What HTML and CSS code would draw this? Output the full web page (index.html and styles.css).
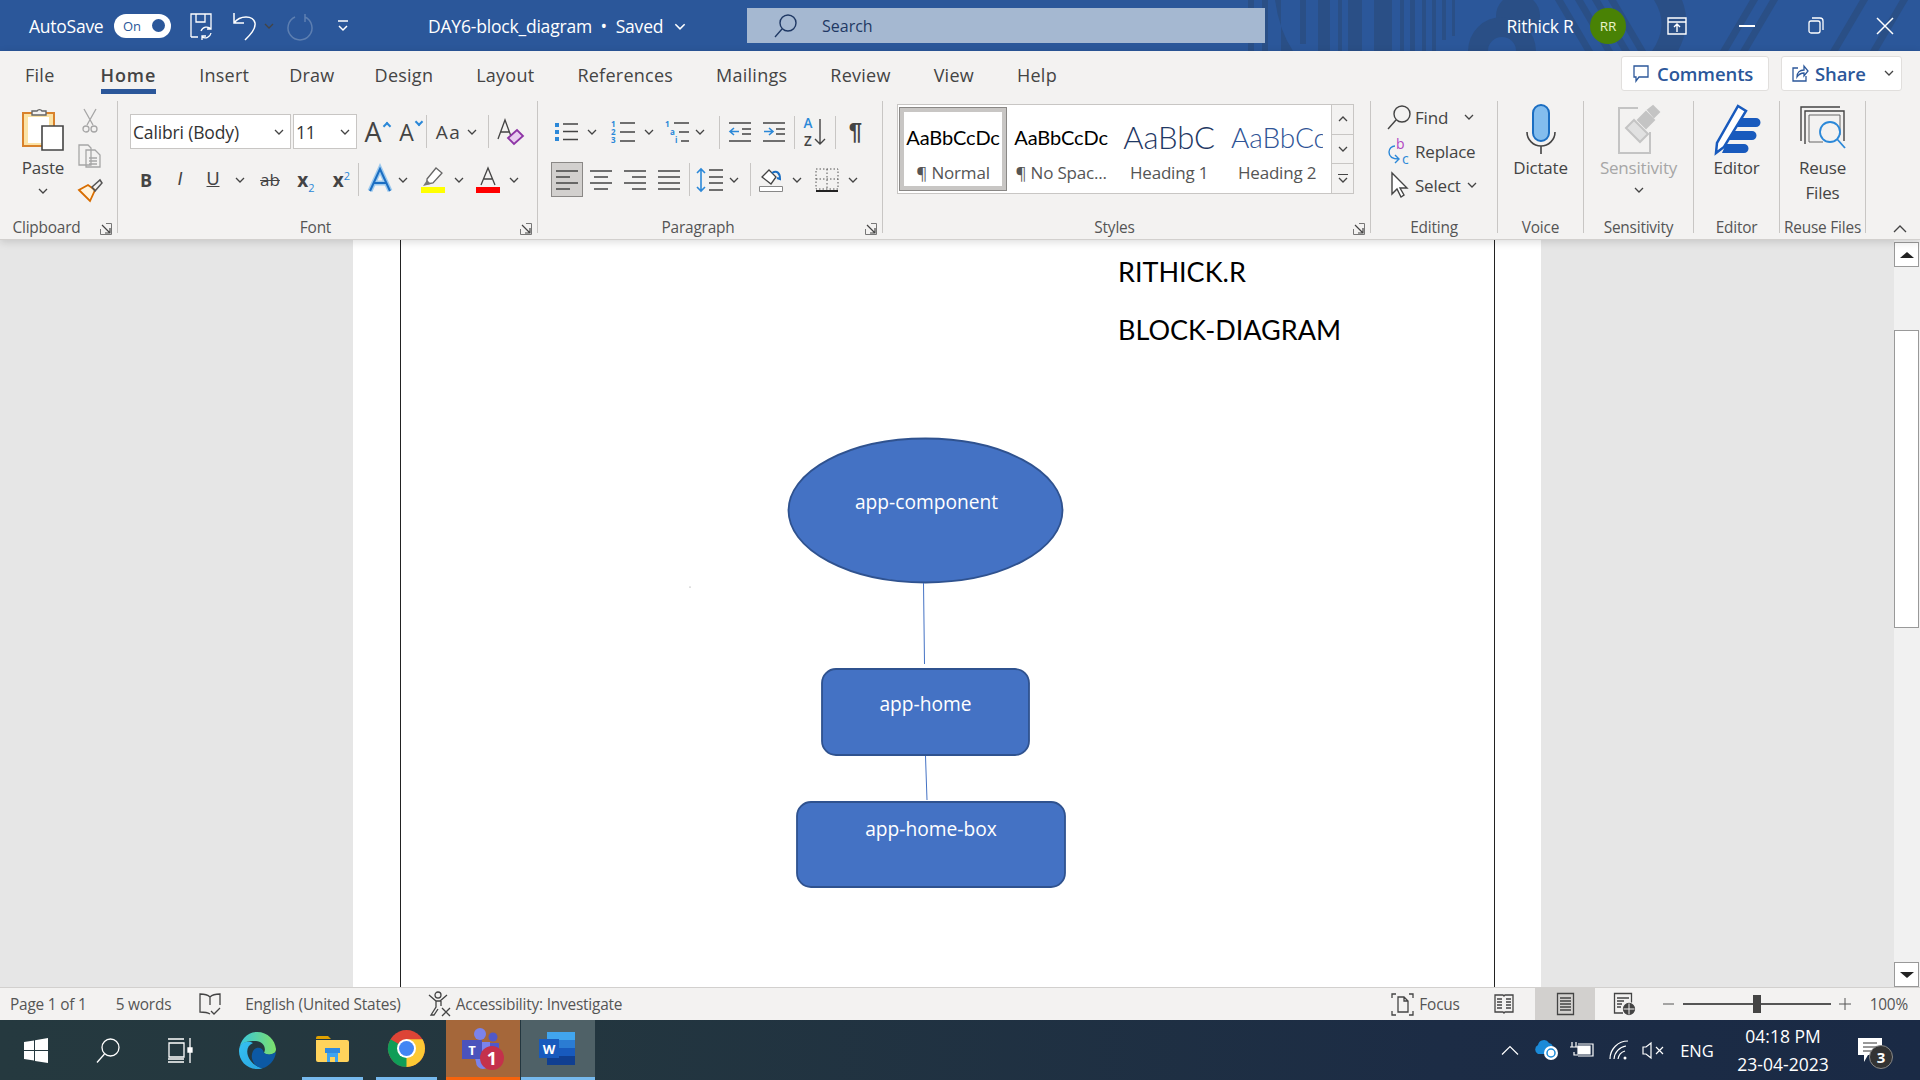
FILE: index.html
```html
<!DOCTYPE html>
<html lang="en">
  <head>
    <meta charset="UTF-8" />
    <title>DAY6-block_diagram - Word</title>
    <link rel="stylesheet" href="styles.css">
  </head>
  <body>
    <svg class="defs" width="0" height="0">
      <symbol id="chev" viewBox="0 0 10 6"><path d="M1 1l4 4 4-4" fill="none" stroke="currentColor" stroke-width="1.3"/></symbol>
      <symbol id="launch" viewBox="0 0 12 12"><path d="M.5.5h11v11H.5z" fill="none" stroke="#777"/><path d="M0 0h6v3H3v3H0z" fill="#f3f2f1"/><path d="M2 2l8 8M5 10h5V5" fill="none" stroke="#444" stroke-width="1.2"/></symbol>
    </svg>

    <div class="app">
      <!-- title bar -->
      <header class="titlebar">
        <svg class="title-pattern" width="690" height="51" viewBox="0 0 690 51">
          <g fill="#2a4f86">
            <path d="M18 0h6v51h-6zM32 0h6v51h-6zM45 0q4 30 18 51h-12V0zM70 0h6v44h-6zM88 0h12v51H88zM108 0h4v51h-4zM118 0h14v51h-14zM144 0h18v51h-18zM170 0h4v51h-4zM180 0h5v51h-5zM192 0h4v51h-4zM202 0h4v51h-4zM212 0h4v40h-4zM222 0h3v36h-3z"/>
            <circle cx="288" cy="16" r="22"/>
            <path d="M238 51a34 34 0 0 1 68 0h-20a14 14 0 0 0-28 0z"/>
            <path d="M325 0h8l30 51h-8zM345 0h8l30 51h-8zM362 0h8l30 51h-8zM378 0h8l30 51h-8z"/>
            <path d="M424 0h28q10 25-4 51h-26q18-26 2-51z"/>
            <path d="M490 51l30-51h8l-30 51zM510 51l30-51h8l-30 51zM640 51l30-51h8l-30 51zM600 51l30-51h8l-30 51z"/>
          </g>
        </svg>
        <div class="qat">
          <span class="autosave">AutoSave</span>
          <span class="toggle"><span>On</span><i></i></span>
          <svg class="ti" width="26" height="27" viewBox="0 0 26 27" fill="none" stroke="#fff" stroke-width="1.3"><path d="M3 25V2h20v14M8 2v8h9V2M3 25h7M14 25a6 6 0 0 0 9-4M13 19a6 6 0 0 1 10-2M23 13v4h-4M14 28v-4h4"/></svg>
          <span class="tool-gap"><svg width="26" height="31" viewBox="0 0 26 31" fill="none" stroke="#fff" stroke-width="1.5"><path d="M2 3v10h10M2 13C8 5 21 5 23 13c1 6-5 12-10 17"/></svg><svg class="ch10" color="#fff"><use href="#chev"/></svg></span>
          <svg width="26" height="28" viewBox="0 0 26 28" fill="none" stroke="#5d7fb1" stroke-width="1.5"><path d="M8 5A12 12 0 1 0 18 5M18 2v8"/></svg>
          <svg width="12" height="14" viewBox="0 0 12 14" fill="none" stroke="#fff" stroke-width="1.5"><path d="M1 2h10M2 7l4 4 4-4"/></svg>
          <span class="doc-title">DAY6-block_diagram &nbsp;•&nbsp; Saved <svg class="ch11" color="#fff"><use href="#chev"/></svg></span>
        </div>
        <div class="search">
          <svg width="24" height="26" viewBox="0 0 24 26" fill="none" stroke="#1f3864" stroke-width="1.4"><circle cx="14" cy="10" r="8"/><path d="M8 16L1 24"/></svg>
          <span>Search</span>
        </div>
        <div class="title-right">
          <span class="user">Rithick R</span>
          <span class="avatar">RR</span>
          <svg width="20" height="18" viewBox="0 0 20 18" fill="none" stroke="#fff" stroke-width="1.4"><path d="M1 1h18v16H1zM1 5h18M10 15V8M7 10l3-3 3 3"/></svg>
          <svg width="16" height="2"><path d="M0 1h16" stroke="#fff" stroke-width="2"/></svg>
          <svg width="16" height="17" viewBox="0 0 16 17" fill="none" stroke="#fff" stroke-width="1.3"><rect x="1" y="4" width="11" height="12" rx="2"/><path d="M4 1h8a3 3 0 0 1 3 3v9"/></svg>
          <svg width="16" height="16" viewBox="0 0 16 16" stroke="#fff" stroke-width="1.5"><path d="M0 0l16 16M16 0L0 16"/></svg>
        </div>
      </header>

      <!-- ribbon -->
      <section class="ribbon">
        <div class="tabs">
          <nav class="tab-list">
            <span>File</span>
            <span class="active">Home</span>
            <span class="tab-tight">Insert</span>
            <span class="tab-tight">Draw</span>
            <span>Design</span>
            <span>Layout</span>
            <span>References</span>
            <span>Mailings</span>
            <span>Review</span>
            <span>View</span>
            <span>Help</span>
          </nav>
          <button class="action comments">
            <svg width="16" height="17" viewBox="0 0 16 17" fill="none" stroke="#2b579a" stroke-width="1.3"><path d="M1 1h14v11H6l-3 4v-4H1z"/></svg>
            Comments
          </button>
          <button class="action share">
            <svg width="17" height="17" viewBox="0 0 17 17" fill="none" stroke="#2b579a" stroke-width="1.3"><path d="M6 3H1v13h13v-5M5 12c0-5 3-7 7-7V1l4 5-4 5V8c-3 0-5 1-7 4z"/></svg>
            Share
            <svg class="ch10 share-chev" color="#2b579a"><use href="#chev"/></svg>
          </button>
        </div>

        <div class="groups">
          <div class="group clipboard">
            <div class="group-body clip-body">
              <div class="paste">
                <svg width="42" height="44" viewBox="0 0 42 44">
                  <path d="M1 6h31v33H1z" fill="#fbe3a6" stroke="#d9822b" stroke-width="2"/>
                  <path d="M6 10h21v26H6z" fill="#fff"/>
                  <path d="M10 8V4h5a3 3 0 0 1 5 0h4v4z" fill="#f3f2f1" stroke="#666" stroke-width="1.4"/>
                  <path d="M20 19h21v24H20z" fill="#fff" stroke="#444" stroke-width="1.6"/>
                </svg>
                <span class="tool-text">Paste</span>
                <svg class="ch10" color="#444"><use href="#chev"/></svg>
              </div>
              <div class="clip-tools">
                <svg width="16" height="24" viewBox="0 0 16 24" fill="none" stroke="#a6a6a6" stroke-width="1.3"><path d="M2 0l9 16M14 0L5 16"/><circle cx="4" cy="20" r="3"/><circle cx="12" cy="20" r="3"/></svg>
                <svg width="24" height="24" viewBox="0 0 24 24" fill="none" stroke="#a6a6a6" stroke-width="1.3"><path d="M1 1h9l3 3v17H1zM8 6h9l5 5v12H8zM11 14h8M11 17h8M11 20h8"/></svg>
                <svg width="24" height="23" viewBox="0 0 24 23"><path d="M1 11l11 11 5-11-7-5z" fill="#fff3dc" stroke="#d86d00" stroke-width="1.8"/><path d="M14 8l8-7 2 3-7 8z" fill="none" stroke="#555" stroke-width="1.5"/></svg>
              </div>
            </div>
            <div class="group-label has-launcher">Clipboard</div>
            <svg class="launcher"><use href="#launch"/></svg>
          </div>

          <div class="group font">
            <div class="group-body">
              <div class="row font-r1">
                <span class="combo font-name">Calibri (Body)<svg class="ch10"><use href="#chev"/></svg></span>
                <span class="combo font-size">11<svg class="ch10"><use href="#chev"/></svg></span>
                <span class="glyph-a big">A<sup class="mini-up"></sup></span>
                <span class="glyph-a">A<sup class="mini-down"></sup></span>
                <i class="vsep"></i>
                <span class="tool-gap aa"><span class="glyph-aa">Aa</span><svg class="ch10"><use href="#chev"/></svg></span>
                <i class="vsep"></i>
                <svg width="26" height="26" viewBox="0 0 26 26"><path d="M1 20L8 1l7 19M4 13h8" fill="none" stroke="#444" stroke-width="1.3"/><path d="M11 19l9-8 6 6-9 8z" fill="#e8cdf0" stroke="#8e35a6" stroke-width="1.8"/></svg>
              </div>
              <div class="row font-r2">
                <b class="glyph-b">B</b>
                <i class="glyph-i">I</i>
                <u class="glyph-u">U</u>
                <svg class="ch10"><use href="#chev"/></svg>
                <s class="glyph-s">ab</s>
                <span class="glyph-x">x<sub>2</sub></span>
                <span class="glyph-x sup-x">x<sup>2</sup></span>
                <i class="vsep"></i>
                <span class="tool-gap"><svg width="24" height="26" viewBox="0 0 24 26"><path d="M2 24L12 2l10 22M6 16h12" fill="none" stroke="#9cc9ee" stroke-width="5"/><path d="M2 24L12 2l10 22M6 16h12" fill="none" stroke="#1b6ec2" stroke-width="2"/></svg><svg class="ch10"><use href="#chev"/></svg></span>
                <span class="tool-gap wide"><svg width="24" height="26" viewBox="0 0 24 26"><path d="M6 12l9-11 6 5-9 10-6 1z" fill="#fff" stroke="#666" stroke-width="1.3"/><path d="M2 19l4-6 4 4z" fill="#777"/><path d="M0 20h24v6H0z" fill="#ff0"/></svg><svg class="ch10"><use href="#chev"/></svg></span>
                <span class="tool-gap wide"><svg width="24" height="26" viewBox="0 0 24 26"><path d="M5 18L12 1l7 17M8 12h8" fill="none" stroke="#444" stroke-width="1.3"/><path d="M0 20h24v6H0z" fill="#f00"/></svg><svg class="ch10"><use href="#chev"/></svg></span>
              </div>
            </div>
            <div class="group-label has-launcher">Font</div>
            <svg class="launcher"><use href="#launch"/></svg>
          </div>

          <div class="group paragraph">
            <div class="group-body">
              <div class="row para-r1">
                <span class="tool-gap wide"><svg width="24" height="22" viewBox="0 0 24 22"><path d="M1 2h4v4H1zM1 9h4v4H1zM1 16h4v4H1z" fill="#2b88d8"/><path d="M9 3h15M9 10.500h15M9 18.500h15" stroke="#444" stroke-width="1.6"/></svg><svg class="ch10"><use href="#chev"/></svg></span>
                <span class="tool-gap wide"><svg width="24" height="24" viewBox="0 0 24 24"><path d="M9 3h15M9 12h15M9 21h15" stroke="#444" stroke-width="1.6"/><text x="0" y="7" class="num">1</text><text x="0" y="15" class="num">2</text><text x="0" y="23" class="num">3</text></svg><svg class="ch10"><use href="#chev"/></svg></span>
                <span class="tool-gap"><svg width="24" height="24" viewBox="0 0 24 24"><path d="M9 3h15M14 12h10M16 21h8" stroke="#444" stroke-width="1.6"/><text x="0" y="7" class="num">1</text><text x="5" y="15" class="num">a</text><text x="10" y="23" class="num">i</text></svg><svg class="ch10"><use href="#chev"/></svg></span>
                <i class="vsep"></i>
                <svg width="22" height="22" viewBox="0 0 22 22" fill="none"><path d="M0 2h22M13 8h9M13 13h9M0 20h22" stroke="#444" stroke-width="1.6"/><path d="M10 10.500H1M5 7l-4 3.500 4 3.500" stroke="#2b88d8" stroke-width="1.6"/></svg>
                <svg width="22" height="22" viewBox="0 0 22 22" fill="none"><path d="M0 2h22M13 8h9M13 13h9M0 20h22" stroke="#444" stroke-width="1.6"/><path d="M1 10.500h9M6 7l4 3.500-4 3.500" stroke="#2b88d8" stroke-width="1.6"/></svg>
                <i class="vsep"></i>
                <span class="sort"><span class="sort-az"><span class="sort-a">A</span><span>Z</span></span><svg width="12" height="26" viewBox="0 0 12 26" fill="none" stroke="#444" stroke-width="1.4"><path d="M6 0v25M1 20l5 5 5-5"/></svg></span>
                <i class="vsep"></i>
                <span class="pilcrow">¶</span>
              </div>
              <div class="row para-r2">
                <span class="pressed"><svg width="22" height="20" viewBox="0 0 22 20"><path d="M0 1h22M0 7h14M0 13h22M0 19h14" stroke="#444" stroke-width="1.6"/></svg></span>
                <svg width="22" height="20" viewBox="0 0 22 20"><path d="M0 1h22M4 7h14M0 13h22M4 19h14" stroke="#444" stroke-width="1.6"/></svg>
                <svg width="22" height="20" viewBox="0 0 22 20"><path d="M0 1h22M8 7h14M0 13h22M8 19h14" stroke="#444" stroke-width="1.6"/></svg>
                <svg width="22" height="20" viewBox="0 0 22 20"><path d="M0 1h22M0 7h22M0 13h22M0 19h22" stroke="#444" stroke-width="1.6"/></svg>
                <i class="vsep"></i>
                <span class="tool-gap"><svg width="26" height="24" viewBox="0 0 26 24" fill="none"><path d="M12 2h14M12 9h14M12 15h14M12 22h14" stroke="#444" stroke-width="1.6"/><path d="M4 1v22M0 5l4-4 4 4M0 19l4 4 4-4" stroke="#2b88d8" stroke-width="1.6"/></svg><svg class="ch10"><use href="#chev"/></svg></span>
                <i class="vsep"></i>
                <span class="tool-gap wide"><svg width="24" height="25" viewBox="0 0 24 25"><path d="M3 10L10 3l7 7-5 7z" fill="#fff" stroke="#444" stroke-width="1.3"/><path d="M13 6c5-3 8 0 8 6l-3-1" fill="none" stroke="#1b6ec2" stroke-width="2"/><path d="M.5 19.500h23v5H.5z" fill="#fff" stroke="#888"/></svg><svg class="ch10"><use href="#chev"/></svg></span>
                <span class="tool-gap wide"><svg width="24" height="24" viewBox="0 0 24 24" fill="none"><path d="M1 1h22v20H1zM12 1v20M1 11h22" stroke="#555" stroke-dasharray="1.500 2"/><path d="M1 23h22" stroke="#222" stroke-width="2"/></svg><svg class="ch10"><use href="#chev"/></svg></span>
              </div>
            </div>
            <div class="group-label has-launcher">Paragraph</div>
            <svg class="launcher"><use href="#launch"/></svg>
          </div>

          <div class="group styles">
            <div class="group-body">
              <div class="gallery">
                <div class="style-cell selected"><span class="preview">AaBbCcDc</span><span class="style-name">¶ Normal</span></div>
                <div class="style-cell"><span class="preview">AaBbCcDc</span><span class="style-name">¶ No Spac...</span></div>
                <div class="style-cell"><span class="preview h1">AaBbC</span><span class="style-name">Heading 1</span></div>
                <div class="style-cell"><span class="preview h2">AaBbCc</span><span class="style-name">Heading 2</span></div>
                <div class="gallery-scroll">
                  <span class="muted"><svg class="ch10 flip" color="#a6a6a6"><use href="#chev"/></svg></span>
                  <span><svg class="ch10"><use href="#chev"/></svg></span>
                  <span class="more"><i></i><svg class="ch10"><use href="#chev"/></svg></span>
                </div>
              </div>
            </div>
            <div class="group-label has-launcher">Styles</div>
            <svg class="launcher"><use href="#launch"/></svg>
          </div>

          <div class="group editing">
            <div class="group-body edit-list">
              <div class="edit-row">
                <svg width="24" height="25" viewBox="0 0 24 25" fill="none" stroke="#444" stroke-width="1.4"><circle cx="15" cy="9" r="8"/><path d="M9 15l-8 9"/></svg>
                <span>Find</span>
                <svg class="ch10 find-chev"><use href="#chev"/></svg>
              </div>
              <div class="edit-row">
                <svg width="24" height="27" viewBox="0 0 24 27" fill="none"><text x="9" y="11" class="rep-b">b</text><text x="15" y="26" class="rep-c">c</text><path d="M8 8a6 6 0 0 0-6 6c0 5 4 7 10 7M8 17l4 4-4 4" stroke="#2b88d8" stroke-width="1.4"/></svg>
                <span>Replace</span>
              </div>
              <div class="edit-row">
                <svg width="24" height="26" viewBox="0 0 24 26" fill="#fff" stroke="#444" stroke-width="1.4"><path d="M5 1v21l5-5 4 8 3-2-4-7h7z"/></svg>
                <span>Select</span>
                <svg class="ch10"><use href="#chev"/></svg>
              </div>
            </div>
            <div class="group-label">Editing</div>
          </div>

          <div class="group voice big-group">
            <div class="group-body big-tool">
              <svg width="30" height="50" viewBox="0 0 30 50" fill="none"><rect x="7" y="1" width="16" height="36" rx="8" fill="#83bdee" stroke="#1b6ec2" stroke-width="2"/><path d="M1 28a14 14 0 0 0 28 0M15 42v8" stroke="#444" stroke-width="1.6"/></svg>
              <span class="tool-text">Dictate</span>
            </div>
            <div class="group-label">Voice</div>
          </div>

          <div class="group sensitivity big-group">
            <div class="group-body big-tool dim">
              <svg width="42" height="50" viewBox="0 0 42 50" fill="none" stroke="#c4c4c4" stroke-width="2"><path d="M20 4H1v45h31V28"/><path d="M8 24l8-8 14 14-8 8z" fill="#e1e1e1"/><path d="M20 16l8-8 8 8-8 8z" fill="#c4c4c4"/><path d="M30 6l5-4 6 6-5 5z" fill="#c4c4c4"/></svg>
              <span class="tool-text">Sensitivity</span>
              <svg class="ch10" color="#b3b3b3"><use href="#chev"/></svg>
            </div>
            <div class="group-label">Sensitivity</div>
          </div>

          <div class="group editor big-group">
            <div class="group-body big-tool">
              <svg width="46" height="50" viewBox="0 0 46 50"><path d="M24 14h18a4 4 0 0 1 0 9H20zM18 27h20a4 4 0 0 1 0 9H14zM12 40h18a4 4 0 0 1 0 9H8z" fill="#185abd"/><path d="M24 2l8 5L10 43l-8 6 1-10z" fill="#fff" stroke="#185abd" stroke-width="2.5"/></svg>
              <span class="tool-text">Editor</span>
            </div>
            <div class="group-label">Editor</div>
          </div>

          <div class="group reuse big-group">
            <div class="group-body big-tool">
              <svg width="46" height="46" viewBox="0 0 46 46" fill="none"><path d="M1 35V1h39" stroke="#444" stroke-width="1.400"/><path d="M5 38V5h39v30" stroke="#444" stroke-width="1.400"/><path d="M9 36V9h31v20M9 36h14" stroke="#666"/><circle cx="30" cy="26" r="10" fill="#f3f2f1" stroke="#2b88d8" stroke-width="1.800"/><path d="M37 33l8 9" stroke="#2b88d8" stroke-width="1.800"/></svg>
              <span class="tool-text two-line">Reuse<br>Files</span>
            </div>
            <div class="group-label">Reuse Files</div>
          </div>

          <svg class="collapse" width="14" height="9" viewBox="0 0 14 9" fill="none" stroke="#444" stroke-width="1.300"><path d="M1 8l6-6 6 6"/></svg>
        </div>
      </section>

      <!-- document -->
      <main class="workspace">
        <div class="canvas">
          <div class="page">
            <div class="page-inner">
              <p class="doc-line first">RITHICK.R</p>
              <p class="doc-line">BLOCK-DIAGRAM</p>
              <svg class="diagram" width="700" height="500" viewBox="401 420 700 500">
                <ellipse cx="925.500" cy="510.500" rx="137" ry="72" class="shape"/>
                <path d="M923.500 583l1 81M925.500 756l1.500 44" class="link"/>
                <rect x="822" y="669" width="207" height="86" rx="14" class="shape"/>
                <rect x="797" y="802" width="268" height="85" rx="14" class="shape"/>
                <text x="926.500" y="509" class="shape-text">app-component</text>
                <text x="925.500" y="711" class="shape-text">app-home</text>
                <text x="931" y="836" class="shape-text">app-home-box</text>
                <circle cx="690" cy="587" r=".6" fill="#888"/>
              </svg>
            </div>
          </div>
        </div>
        <aside class="scrollbar">
          <span class="scroll-btn"><i class="tri-up"></i></span>
          <span class="scroll-thumb"></span>
          <span class="scroll-btn"><i class="tri-down"></i></span>
        </aside>
      </main>

      <!-- status bar -->
      <footer class="statusbar">
        <div class="status-left">
          <span>Page 1 of 1</span>
          <span class="words">5 words</span>
          <svg class="book" width="24" height="24" viewBox="0 0 24 24" fill="none" stroke="#444" stroke-width="1.300"><path d="M12 5C9 2 5 2 2 2v18c3 0 7 0 10 2M12 5c3-3 6-3 10-3v11M12 5v8M13 19l3 3 6-6"/></svg>
          <span class="lang">English (United States)</span>
          <svg class="access" width="24" height="26" viewBox="0 0 24 26" fill="none" stroke="#444" stroke-width="1.300"><circle cx="10" cy="4" r="3"/><path d="M1 4l7 6h4l7-6M8 10v6l-5 8h3l4-6M13 10v5M14 17l8 8M22 17l-8 8"/></svg>
          <span class="access-text">Accessibility: Investigate</span>
        </div>
        <div class="status-right">
          <span class="focus">
            <svg width="23" height="23" viewBox="0 0 23 23" fill="none" stroke="#444" stroke-width="1.300"><path d="M1 5V1h4M18 1h4v4M1 18v4h4M22 18v4h-4M7 4h6l4 4v11H7zM13 4v4h4"/></svg>
            Focus
          </span>
          <svg class="read-view" width="20" height="20" viewBox="0 0 20 20" fill="none" stroke="#444" stroke-width="1.300"><path d="M1 1h8l1 1 1-1h8v17h-8l-1 1-1-1H1zM3 5h5M3 8h5M3 11h5M3 14h5M12 5h5M12 8h5M12 11h5M12 14h5"/></svg>
          <span class="print-view"><svg width="17" height="22" viewBox="0 0 17 22" fill="none" stroke="#444" stroke-width="1.300"><path d="M.500.500h16v21H.500zM3 5h11M3 8h11M3 11h11M3 14h11M3 17h11"/></svg></span>
          <svg width="21" height="22" viewBox="0 0 21 22" fill="none" stroke="#444" stroke-width="1.300"><path d="M9 20H.500V.500h17v9M3 5h12M3 8h7M3 11h5M3 14h4"/><circle cx="15" cy="16" r="5.500" fill="#444"/><path d="M9.500 16h11M15 10.500v11" stroke="#f3f2f1" stroke-width="1"/></svg>
          <svg width="11" height="2"><path d="M0 1h11" stroke="#555"/></svg>
          <span class="zoom-track"><i></i></span>
          <svg width="12" height="12" viewBox="0 0 12 12"><path d="M0 6h12M6 0v12" stroke="#555"/></svg>
          <span class="zoom-value">100%</span>
        </div>
      </footer>

      <!-- taskbar -->
      <footer class="taskbar">
        <div class="task-left">
          <svg width="24" height="25" viewBox="0 0 24 25" fill="#fff"><path d="M0 4l10-1.500V12H0zM11 2.300L24 0v12H11zM0 13h10v9.500L0 21zM11 13h13v12l-13-2z"/></svg>
          <svg width="24" height="25" viewBox="0 0 24 25" fill="none" stroke="#fff" stroke-width="1.300"><circle cx="14.500" cy="9.500" r="8.500"/><path d="M8.500 16L1 24.500"/></svg>
          <svg width="24" height="25" viewBox="0 0 24 25" fill="none" stroke="#fff" stroke-width="1.300"><path d="M0 1h16M0 24h16M1 5h15v14H1zM0 21h16M22 0v25"/><path d="M20 10h4v4h-4z" fill="#fff"/></svg>
          <svg width="37" height="37" viewBox="0 0 37 37">
            <defs>
              <linearGradient id="edgeA" x1="0" y1="0" x2="1" y2="1"><stop offset="0" stop-color="#35c1f1"/><stop offset="1" stop-color="#2aa4e0"/></linearGradient>
              <linearGradient id="edgeB" x1="0" y1="0" x2="1" y2="0"><stop offset="0" stop-color="#36c5e0"/><stop offset="1" stop-color="#7ee06a"/></linearGradient>
            </defs>
            <path d="M18 0c11 0 18 8 19 17 0 6-8 7-12 4 3-6-2-12-8-12C9 9 0 10 0 19 1 8 8 0 18 0z" fill="url(#edgeB)"/>
            <path d="M0 19C0 10 9 8 14 11c-5 2-7 7-5 13 2 6 8 11 15 12-2 1-4 1-6 1C8 37 0 29 0 19z" fill="url(#edgeA)"/>
            <path d="M14 19c3-5 10-4 11 2 3 2 8 2 12-1-1 9-8 15-13 16-8 0-14-9-10-17z" fill="#0c59a4"/>
          </svg>
          <span class="task-tile pinned">
            <svg width="33" height="26" viewBox="0 0 33 26"><path d="M0 2a2 2 0 0 1 2-2h10l3 3H0z" fill="#e0a100"/><path d="M0 4h31a2 2 0 0 1 2 2v18a2 2 0 0 1-2 2H2a2 2 0 0 1-2-2z" fill="#ffd35c"/><path d="M9 12h15v5H9z" fill="#2f8ae0"/><path d="M11 17h11v9h-3v-5h-5v5h-3z" fill="#3ea4f0"/></svg>
          </span>
          <span class="task-tile pinned">
            <svg width="37" height="37" viewBox="0 0 37 37"><circle cx="18.500" cy="18.500" r="18.500" fill="#dd4436"/><path d="M18.500 18.500L2.500 9.200A18.500 18.500 0 0 0 18.500 37l8-12z" fill="#109d58"/><path d="M18.500 18.500L18.500 37A18.500 18.500 0 0 0 34.500 9.300H18.500z" fill="#fcc934"/><circle cx="18.500" cy="18.500" r="9.500" fill="#fff"/><circle cx="18.500" cy="18.500" r="7.500" fill="#4285f4"/></svg>
          </span>
          <span class="task-tile teams">
            <svg width="42" height="44" viewBox="0 0 42 44"><circle cx="18" cy="7" r="6" fill="#7b83eb"/><circle cx="31" cy="10" r="4.500" fill="#5059c9"/><path d="M24 16h13v14H24z" fill="#5059c9"/><path d="M9 15h19v20a7 7 0 0 1-14 0z" fill="#7b83eb"/><path d="M0 13h20v19H0z" fill="#4b53bc"/><text x="10" y="28" class="teams-t">T</text><circle cx="30" cy="31" r="12" fill="#c4314b"/><text x="30" y="38" class="teams-n">1</text></svg>
          </span>
          <span class="task-tile word">
            <svg width="36" height="33" viewBox="0 0 36 33"><path d="M8 0h28v8H8z" fill="#41a5ee"/><path d="M8 8h28v8H8z" fill="#2b7cd3"/><path d="M8 16h28v8H8z" fill="#185abd"/><path d="M8 24h28v9H8z" fill="#103f91"/><path d="M0 7h20v19H0z" fill="#185abd"/><text x="10" y="22" class="word-w">W</text></svg>
          </span>
        </div>
        <div class="tray">
          <svg width="18" height="10" viewBox="0 0 18 10" fill="none" stroke="#fff" stroke-width="1.200"><path d="M1 9.500l8-8 8 8"/></svg>
          <svg width="25" height="22" viewBox="0 0 25 22"><path d="M4 15a5 5 0 0 1 0-9 6 6 0 0 1 11-2 5 5 0 0 1 3 8l-2 3z" fill="#1a8ad8"/><circle cx="17" cy="14" r="7" fill="#fff"/><circle cx="17" cy="14" r="4" fill="none" stroke="#1a8ad8" stroke-width="1.500"/></svg>
          <svg width="24" height="16" viewBox="0 0 24 16" fill="none" stroke="#fff" stroke-width="1.200"><path d="M0 5h8M2 0v5M6 0v5M4 10v3h4"/><path d="M8 2h15v12H8"/><path d="M8 4h12v8H8z" fill="#fff"/></svg>
          <svg width="20" height="20" viewBox="0 0 20 20" fill="none" stroke="#fff" stroke-width="1.200"><path d="M1 19A18 18 0 0 1 19 1M5 19A14 14 0 0 1 17 6M9 19a10 10 0 0 1 7-8"/><circle cx="16" cy="18" r="1.500" fill="#fff" stroke="none"/></svg>
          <svg width="22" height="17" viewBox="0 0 22 17" fill="none" stroke="#fff" stroke-width="1.200"><path d="M1 5h3l5-4v15l-5-4H1zM14 5l7 7M21 5l-7 7"/></svg>
          <span>ENG</span>
          <span class="clock"><span>04:18 PM</span><span>23-04-2023</span></span>
          <span class="notify">
            <svg width="24" height="25" viewBox="0 0 24 25"><path d="M0 0h24v17H10l-4 7v-7H0z" fill="#fff"/><path d="M5 5h14M5 9h14M5 13h8" stroke="#333"/></svg>
            <span class="notify-badge">3</span>
          </span>
        </div>
      </footer>
    </div>
  </body>
</html>
```

FILE: styles.css
```css
* {
  margin: 0;
  padding: 0;
  box-sizing: border-box;
}

html,
body {
  width: 1920px;
  height: 1080px;
  overflow: hidden;
}

body {
  font-family: "Open Sans", "Noto Sans", sans-serif;
  color: #444;
}

.defs {
  position: absolute;
}

svg {
  display: block;
  flex: none;
  overflow: visible;
}

.ch10 {
  width: 10px;
  height: 6px;
  color: #444;
}

.ch11 {
  display: inline-block;
  width: 12px;
  height: 7px;
  margin-left: 6px;
  vertical-align: 3px;
}

.flip {
  transform: scaleY(-1);
}

.app {
  display: flex;
  flex-direction: column;
  height: 1080px;
}

/* title bar */
.titlebar {
  position: relative;
  display: flex;
  flex: none;
  align-items: center;
  height: 51px;
  background-color: #2b579a;
  color: #fff;
}

.title-pattern {
  position: absolute;
  top: 0;
  right: 0;
}

.qat {
  position: relative;
  display: grid;
  grid-template-columns: 114px 57px 60px 44px 50px 36px 386px;
  align-items: center;
  justify-items: center;
  width: 747px;
}

.autosave {
  justify-self: start;
  padding-left: 29px;
  font-size: 17.5px;
  letter-spacing: -0.25px;
}

.toggle {
  display: flex;
  align-items: center;
  justify-content: space-between;
  width: 57px;
  height: 24px;
  padding: 0 6px 0 9px;
  border-radius: 12px;
  background-color: #fff;
  color: #2b579a;
  font-size: 13px;
}

.toggle i {
  width: 13px;
  height: 13px;
  border-radius: 50%;
  background-color: #2b579a;
}

.doc-title {
  justify-self: start;
  padding-left: 67px;
  white-space: nowrap;
  font-size: 17.5px;
  letter-spacing: -0.2px;
}

.search {
  position: relative;
  display: flex;
  align-items: center;
  gap: 24px;
  width: 518px;
  height: 35px;
  padding-left: 27px;
  background-color: #a5b8d1;
  color: #1f3864;
  font-size: 16px;
}

.title-right {
  position: relative;
  display: grid;
  grid-template-columns: 90px 46px 92px 48px 89px 50px;
  align-items: center;
  justify-items: center;
  padding-left: 230px;
}

.user {
  font-size: 17.5px;
  letter-spacing: -0.3px;
  white-space: nowrap;
}

.avatar {
  display: flex;
  align-items: center;
  justify-content: center;
  width: 36px;
  height: 36px;
  border-radius: 50%;
  background-color: #498205;
  color: #e9f2c8;
  font-size: 13.5px;
}

/* ribbon */
.ribbon {
  position: relative;
  z-index: 2;
  flex: none;
  height: 189px;
  background-color: #f3f2f1;
  border-bottom: 1px solid #d2d0ce;
  box-shadow: 0 2px 8px rgba(0, 0, 0, 0.14);
}

.tabs {
  display: flex;
  align-items: center;
  height: 50px;
}

.tab-list {
  display: flex;
  gap: 43px;
  padding: 0 0 2px 25px;
  font-size: 18px;
  letter-spacing: 0.25px;
}

.tab-list span {
  position: relative;
  line-height: 24px;
}

.tab-list .active {
  margin-left: 3px;
  font-weight: 600;
  letter-spacing: 0.9px;
}

.tab-list .tab-tight {
  margin-right: -3px;
}

.tab-list .active::after {
  content: "";
  position: absolute;
  left: 0;
  right: 0;
  bottom: -7px;
  height: 5px;
  background-color: #2b579a;
}

.action {
  display: flex;
  align-items: center;
  height: 35px;
  margin-bottom: 6px;
  border: 1px solid #e1dfdd;
  border-radius: 3px;
  background-color: #fff;
  color: #2b579a;
  font-family: inherit;
  font-size: 18.5px;
  font-weight: 600;
  letter-spacing: -0.1px;
}

.comments {
  gap: 8px;
  width: 148px;
  margin-left: auto;
  padding-left: 11px;
}

.share {
  gap: 6px;
  width: 121px;
  margin: 0 18px 6px 12px;
  padding-left: 10px;
}

.share-chev {
  margin-left: 12px;
}

.groups {
  display: flex;
  height: 132px;
}

.group {
  position: relative;
  display: flex;
  flex: none;
  flex-direction: column;
  border-right: 1px solid #c8c6c4;
}

.group-body {
  flex: 1;
  padding-top: 13px;
}

.group-label {
  height: 20px;
  margin-bottom: -5px;
  text-align: center;
  font-size: 15.4px;
  line-height: 20px;
  letter-spacing: -0.2px;
  color: #555;
  white-space: nowrap;
}

.has-launcher {
  padding-right: 24px;
}

.launcher {
  position: absolute;
  right: 5px;
  bottom: -2px;
  width: 12px;
  height: 12px;
}

.clipboard {
  width: 118px;
}

.font {
  width: 420px;
}

.paragraph {
  width: 345px;
}

.styles {
  width: 488px;
}

.editing {
  width: 127px;
}

.voice,
.editor,
.reuse {
  width: 86px;
}

.sensitivity {
  width: 110px;
}

.clip-body {
  display: flex;
  padding: 6px 0 0 0;
}

.paste {
  display: flex;
  flex-direction: column;
  align-items: center;
  width: 86px;
}

.paste .tool-text {
  margin-top: 5px;
}

.paste .ch10 {
  margin-top: 8px;
}

.clip-tools {
  display: flex;
  flex-direction: column;
  align-items: center;
  gap: 11px;
  width: 16px;
  margin: 2px 0 0 -4px;
}

.tool-text {
  font-size: 17px;
  line-height: 24px;
  letter-spacing: -0.2px;
  color: #444;
}

.row {
  display: grid;
  align-items: center;
  justify-items: center;
  height: 35px;
}

.font .group-body {
  padding-left: 12px;
}

.font-r1 {
  grid-template-columns: 163px 64px 32px 35px 5px 55px 9px 34px;
}

.font-r2 {
  grid-template-columns: 32px 36px 30px 24px 36px 36px 28px 12px 47px 63px 47px;
  margin-top: 13px;
}

.paragraph .group-body {
  padding-left: 10px;
}

.para-r1 {
  grid-template-columns: 54px 60px 45px 18px 30px 38px 3px 38px 3px 37px;
}

.para-r1 .vsep:first-of-type {
  margin-left: 7px;
}

.para-r2 {
  grid-template-columns: 38px 30px 38px 30px 11px 45px 21px 39px 73px;
  margin-top: 13px;
}

.combo {
  display: flex;
  align-items: center;
  justify-content: space-between;
  justify-self: start;
  height: 35px;
  padding: 0 6px 0 2px;
  border: 1px solid #c8c6c4;
  background-color: #fff;
  color: #333;
  font-size: 17.5px;
  letter-spacing: -0.15px;
  white-space: nowrap;
}

.font-name {
  width: 161px;
}

.font-size {
  width: 64px;
}

.vsep {
  width: 1px;
  height: 33px;
  background-color: #c8c6c4;
}

.tool-gap {
  display: flex;
  align-items: center;
  gap: 6px;
}

.tool-gap.wide {
  gap: 9px;
}

.glyph-a {
  position: relative;
  font-size: 23px;
  line-height: 30px;
}

.glyph-a.big {
  font-size: 27px;
}

.mini-up,
.mini-down {
  position: absolute;
  top: 6px;
  right: -8px;
  width: 6px;
  height: 6px;
  border-left: 2px solid #2b88d8;
  border-top: 2px solid #2b88d8;
  transform: rotate(45deg);
}

.mini-down {
  top: 2px;
  transform: rotate(225deg);
}

.glyph-aa {
  font-size: 19px;
  letter-spacing: 1.5px;
}

.glyph-b {
  font-size: 18px;
}

.glyph-i,
.glyph-u {
  font-size: 18px;
  font-family: "Liberation Sans", sans-serif;
}

.glyph-s {
  font-size: 17px;
  text-decoration-thickness: 1px;
}

.glyph-x {
  font-size: 19px;
  font-weight: 700;
  line-height: 24px;
  white-space: nowrap;
}

.glyph-x sub,
.glyph-x sup {
  font-size: 11px;
  font-weight: 400;
  line-height: 0;
  color: #2b88d8;
}

.sup-x {
  justify-self: end;
  margin-right: 2px;
}

.num {
  font-size: 8px;
  font-weight: 700;
  fill: #2b88d8;
}

.sort {
  display: flex;
  align-items: center;
  gap: 2px;
}

.sort-az {
  display: flex;
  flex-direction: column;
  align-items: center;
  font-size: 13.5px;
  font-weight: 600;
  line-height: 18px;
}

.sort-a {
  color: #2b88d8;
}

.pilcrow {
  font-family: "Liberation Sans", sans-serif;
  font-size: 24px;
  font-weight: 700;
}

.pressed {
  display: flex;
  align-items: center;
  justify-content: center;
  width: 32px;
  height: 35px;
  border: 1px solid #8a8886;
  background-color: #d2d0ce;
}

/* styles gallery */
.styles .group-body {
  padding: 3px 0 0 14px;
}

.gallery {
  display: flex;
  width: 457px;
  height: 90px;
  border: 1px solid #c8c6c4;
  background-color: #fff;
}

.style-cell {
  display: flex;
  flex-direction: column;
  align-items: center;
  width: 108.500px;
  padding-top: 14px;
  overflow: hidden;
}

.selected {
  margin: 2px 0 2px 1px;
  padding-top: 7px;
  border: 5px solid #c8c6c4;
  outline: 1px solid #8a8886;
  outline-offset: -1px;
}

.preview {
  height: 36px;
  font-family: "Lato", sans-serif;
  font-size: 20px;
  line-height: 36px;
  letter-spacing: -0.1px;
  color: #000;
  white-space: nowrap;
}

.preview.h1 {
  font-size: 31px;
  font-weight: 300;
  color: #1f3864;
}

.preview.h2 {
  width: 92px;
  overflow: hidden;
  font-size: 28px;
  font-weight: 300;
  color: #2f5496;
}

.style-name {
  margin-top: 6px;
  font-size: 17px;
  line-height: 24px;
  letter-spacing: -0.2px;
  color: #555;
  white-space: nowrap;
}

.gallery-scroll {
  display: flex;
  flex-direction: column;
  width: 22px;
  margin-left: auto;
}

.gallery-scroll span {
  display: flex;
  flex: 1;
  flex-direction: column;
  align-items: center;
  justify-content: center;
  gap: 2px;
  border-left: 1px solid #c8c6c4;
  border-bottom: 1px solid #c8c6c4;
  background-color: #f3f2f1;
}

.gallery-scroll .more {
  border-bottom: 0;
}

.more i {
  width: 10px;
  height: 1.500px;
  background-color: #444;
}

/* editing */
.edit-list {
  display: flex;
  flex-direction: column;
  gap: 8px;
  padding: 3px 0 0 16px;
}

.edit-row {
  display: flex;
  align-items: center;
  gap: 4px;
  height: 26px;
  font-size: 17px;
  letter-spacing: -0.2px;
  white-space: nowrap;
}

.edit-row .ch10 {
  margin-left: 2px;
}

.edit-row .find-chev {
  margin-left: 12px;
}

.rep-b {
  font-size: 14px;
  fill: #b146c2;
}

.rep-c {
  font-size: 14px;
  fill: #2b88d8;
}

.big-tool {
  display: flex;
  flex-direction: column;
  align-items: center;
  padding-top: 3px;
}

.big-tool .tool-text {
  margin-top: 2px;
  text-align: center;
}

.reuse .big-tool {
  padding-top: 5px;
}

.reuse .big-tool .tool-text {
  margin-top: 3px;
}

.two-line {
  line-height: 25px;
}

.dim .tool-text {
  color: #a6a6a6;
}

.dim .ch10 {
  margin-top: 7px;
}

.collapse {
  align-self: flex-end;
  margin: 0 0 0 27px;
}

/* document */
.workspace {
  display: flex;
  flex: 1;
  min-height: 0;
  background-color: #e6e6e6;
  border-bottom: 1px solid #d2d0ce;
}

.canvas {
  display: flex;
  flex: none;
  justify-content: center;
  width: 1894px;
}

.page {
  width: 1188px;
  padding: 0 46px 0 47px;
  background-color: #fff;
}

.page-inner {
  height: 100%;
  overflow: hidden;
  border-left: 1px solid #222;
  border-right: 1px solid #222;
}

.doc-line {
  padding-left: 717px;
  font-family: "Lato", sans-serif;
  font-size: 27px;
  line-height: 58px;
  color: #000;
}

.doc-line.first {
  margin-top: 3px;
}

.diagram {
  margin-top: 61px;
}

.shape {
  fill: #4472c4;
  stroke: #2f528f;
  stroke-width: 1.800;
}

.link {
  fill: none;
  stroke: #4472c4;
  stroke-width: 1;
}

.shape-text {
  fill: #fff;
  font-family: "Open Sans", sans-serif;
  font-size: 19.2px;
  text-anchor: middle;
}

.scrollbar {
  display: flex;
  flex-direction: column;
  align-items: stretch;
  width: 26px;
  padding: 2px 1px 2px 0;
  background-color: #f1f1f1;
}

.scroll-btn {
  display: flex;
  flex: none;
  align-items: center;
  justify-content: center;
  height: 25px;
  border: 1px solid #999;
  background-color: #fff;
}

.scroll-thumb {
  flex: none;
  height: 298px;
  margin: 63px 0 334px;
  border: 1px solid #999;
  background-color: #fff;
}

.tri-up,
.tri-down {
  width: 0;
  height: 0;
  border-left: 7px solid transparent;
  border-right: 7px solid transparent;
}

.tri-up {
  border-bottom: 6px solid #222;
}

.tri-down {
  border-top: 6px solid #222;
}

/* status bar */
.statusbar {
  display: flex;
  flex: none;
  align-items: center;
  justify-content: space-between;
  height: 32px;
  background-color: #f3f2f1;
  font-size: 15.4px;
  letter-spacing: -0.2px;
  color: #555;
}

.status-left {
  display: flex;
  align-items: center;
  padding-left: 10px;
  white-space: nowrap;
}

.words {
  margin-left: 29px;
}

.book {
  margin-left: 27px;
}

.lang {
  margin-left: 23px;
}

.access {
  margin-left: 27px;
}

.access-text {
  margin-left: 4px;
}

.status-right {
  display: grid;
  grid-template-columns: 65px 77px 60px 58px 30px 148px 28px 49px;
  align-items: center;
  justify-items: center;
  height: 32px;
  padding-right: 12px;
}

.focus {
  display: flex;
  align-items: center;
  gap: 5px;
}

.read-view {
  justify-self: end;
  margin-right: 21px;
}

.print-view {
  display: flex;
  align-items: center;
  justify-content: center;
  width: 60px;
  height: 32px;
  background-color: #d2d0ce;
}

.zoom-track {
  position: relative;
  width: 148px;
  height: 2px;
  background-color: #555;
}

.zoom-track i {
  position: absolute;
  top: -8px;
  left: 70px;
  width: 8px;
  height: 18px;
  background-color: #444;
}

.zoom-value {
  justify-self: end;
}

/* taskbar */
.taskbar {
  display: flex;
  flex: none;
  align-items: center;
  justify-content: space-between;
  height: 60px;
  background: linear-gradient(90deg, #25393f 0%, #23363f 30%, #1c2c45 75%, #1a2a45 100%);
  color: #fff;
}

.task-left {
  display: grid;
  grid-template-columns: 72px 72px 72px 82px 68px 80px 74px 74px;
  align-items: center;
  justify-items: center;
  height: 60px;
}

.task-tile {
  display: flex;
  align-items: center;
  justify-content: center;
  width: 100%;
  height: 60px;
  border-bottom: 3px solid;
}

.pinned {
  width: 61px;
  border-bottom-color: #76b9ed;
}

.teams {
  background-color: #a5673a;
  border-bottom-color: #f7630c;
}

.word {
  margin-left: 1px;
  padding-right: 2px;
  background-color: #4f6167;
  border-bottom-color: #76b9ed;
}

.teams-t,
.word-w {
  font-size: 13px;
  font-weight: 700;
  fill: #fff;
  text-anchor: middle;
}

.teams-n {
  font-size: 18px;
  font-weight: 700;
  fill: #fff;
  text-anchor: middle;
}

.tray {
  display: grid;
  grid-template-columns: 36px 36px 36px 38px 30px 58px 114px 60px;
  align-items: center;
  justify-items: center;
  padding-right: 20px;
  font-size: 16.5px;
}

.clock {
  display: flex;
  flex-direction: column;
  align-items: center;
  gap: 7px;
  font-size: 17.5px;
  line-height: 21px;
  white-space: nowrap;
}

.notify {
  position: relative;
  display: block;
}

.notify-badge {
  position: absolute;
  top: 7px;
  left: 11px;
  width: 24px;
  height: 24px;
  border: 1px solid #888;
  border-radius: 50%;
  background-color: #333;
  text-align: center;
  font-size: 15px;
  font-weight: 700;
  line-height: 22px;
}
```
